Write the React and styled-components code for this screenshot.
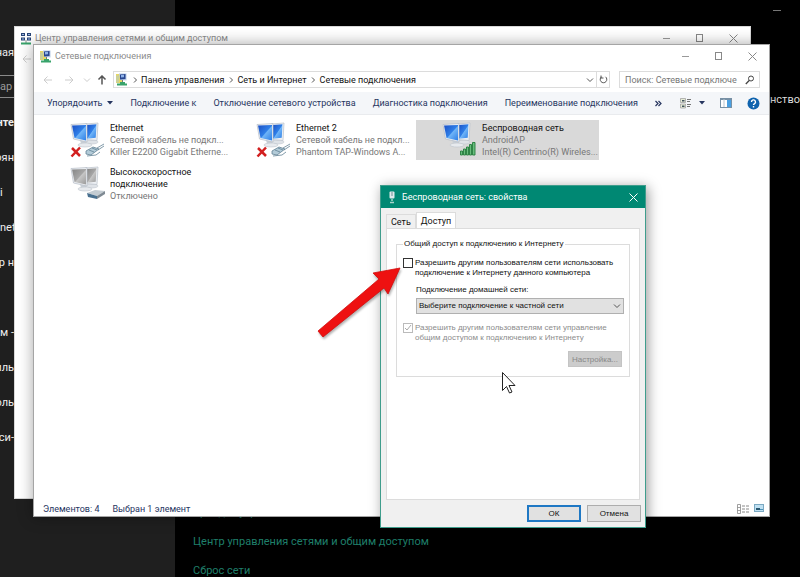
import React from 'react';
import styled, { createGlobalStyle, css } from 'styled-components';

const Global = createGlobalStyle`
  *, *::before, *::after { box-sizing: border-box; }
  html, body { margin: 0; background: #000; }
  body { font-family: Roboto, "Noto Sans", sans-serif; font-size: 9px; color: #1a1a1a; }
  button, input, select { font: inherit; color: inherit; margin: 0; }
  button { border: 0; background: none; padding: 0; }
  svg { display: block; flex: none; }
`;

/* ---------- desktop and settings app ---------- */

const Desktop = styled.div`
  position: relative;
  display: grid;
  grid-template-columns: 175px 1fr;
  height: 100vh;
  min-height: 440px;
  overflow: hidden;
  background: #000;
`;

const SideNav = styled.nav`
  display: flex;
  flex-direction: column;
  padding-top: 35px;
  background: #1f1f1f;
  color: #eee;
  font-size: 11px;
`;

const SideItem = styled.a`
  display: flex;
  align-items: center;
  justify-content: ${(p) => (p.$start ? 'flex-start' : 'flex-end')};
  width: 14px;
  height: 35px;
  white-space: nowrap;
  color: inherit;
  text-decoration: none;
  font-weight: ${(p) => (p.$strong ? 700 : 400)};
`;

const SideSearch = styled.input`
  width: 100%;
  height: 23px;
  margin: 5px 0 7px;
  padding: 0;
  border: solid #8a8a8a;
  border-width: 1px 0;
  background: transparent;
  &::placeholder { color: #999; opacity: 1; }
`;

const SettingsMain = styled.main`
  display: flex;
  flex-direction: column;
  padding: 10px 0 0 18px;
  min-width: 0;
`;

const SettingsBar = styled.header`
  display: flex;
  justify-content: flex-end;
  padding-right: 19px;
`;

const Minimise = styled.button`
  width: 8px;
  height: 1px;
  background: #777;
`;

const SettingsNote = styled.p`
  align-self: flex-end;
  width: 30px;
  margin: 80px 0 0;
  white-space: nowrap;
  color: #ddd;
  font-size: 11px;
  line-height: 18px;
`;

const SettingsLinks = styled.div`
  display: flex;
  flex-direction: column;
  align-items: flex-start;
  margin-top: auto;
  height: 79px;
`;

const SettingsLink = styled.a`
  flex: none;
  height: 29px;
  line-height: 29px;
  color: #1f7f6a;
  font-size: 11px;
  text-decoration: none;
`;

/* ---------- windows ---------- */

const Window = styled.section`
  position: absolute;
  display: flex;
  flex-direction: column;
  background: #fff;
  ${(p) => (p.$back
    ? css`inset: 26px 49px 78px 14px; border: 1px solid #d8d8d8;`
    : css`inset: 44px 30px 60px 33px; border: 1px solid #a5a5a5; box-shadow: 0 0 14px rgba(0, 0, 0, 0.35);`)}
`;

const TitleBar = styled.header`
  display: flex;
  align-items: center;
  gap: 3px;
  height: 22px;
  padding: 0 9px 0 5px;
  color: #8c8c8c;
`;

const WindowTitle = styled.h1`
  flex: 1;
  margin: 0;
  font-size: 9px;
  font-weight: 400;
  white-space: nowrap;
`;

const Controls = styled.div`
  display: flex;
  gap: 17px;
`;

const IconButton = styled.button`
  display: grid;
  place-items: center;
  width: ${(p) => p.$w || 16}px;
  height: 16px;
`;

const BackArrowRow = styled.div`
  padding: 5px 7px;
`;

const NavRow = styled.div`
  display: flex;
  align-items: center;
  height: 25px;
  padding: 0 9px 0 5px;
`;

const Address = styled.div`
  display: flex;
  align-items: center;
  flex: 1;
  height: 17px;
  min-width: 0;
  margin: 0 9px 0 2px;
  padding-left: 1px;
  border: 1px solid #dcdcdc;
  white-space: nowrap;
`;

const Crumb = styled.a`
  color: #111;
  text-decoration: none;
`;

const CrumbMark = styled.span`
  display: grid;
  place-items: center;
  width: 13px;
`;

const AddressEnd = styled.div`
  display: flex;
  align-items: stretch;
  height: 100%;
  margin-left: auto;
`;

const Refresh = styled.button`
  display: grid;
  place-items: center;
  width: 13px;
  border-left: 1px solid #dcdcdc;
`;

const Search = styled.label`
  display: flex;
  align-items: center;
  width: 141px;
  height: 17px;
  padding: 0 4px 0 5px;
  border: 1px solid #dcdcdc;
`;

const SearchInput = styled.input`
  flex: 1;
  min-width: 0;
  padding: 0;
  border: 0;
  outline: 0;
  background: none;
  &::placeholder { color: #777; opacity: 1; }
`;

const Toolbar = styled.div`
  display: flex;
  align-items: center;
  gap: 17px;
  height: 23px;
  padding: 0 9px 0 13px;
  border-bottom: 1px solid #e9ebee;
  background: #f4f6f9;
  color: #26355f;
`;

const ToolButton = styled.button`
  display: flex;
  align-items: center;
  gap: 5px;
  white-space: nowrap;
`;

const ToolIcons = styled.div`
  display: flex;
  align-items: center;
  gap: 15px;
  margin-left: auto;
`;

const Connections = styled.ul`
  display: grid;
  grid-template-columns: repeat(auto-fill, 183px);
  gap: 4px 3px;
  align-content: start;
  flex: 1;
  margin: 0;
  padding: 5px 10px;
  list-style: none;
`;

const Connection = styled.li`
  display: flex;
  gap: 4px;
  height: 40px;
  padding: 2px 0 0 26px;
  background: ${(p) => (p.$selected ? '#d9d9d9' : 'transparent')};
`;

const ConnectionText = styled.div`
  width: 117px;
  line-height: 12px;
  color: #777;
  div { white-space: nowrap; }
`;

const ConnectionName = styled.div`
  color: #111;
  && { white-space: normal; }
`;

const StatusBar = styled.footer`
  display: flex;
  align-items: center;
  gap: 13px;
  height: 15px;
  padding: 0 5px 0 9px;
  color: #26355f;
`;

const StatusIcons = styled.div`
  display: flex;
  gap: 5px;
  margin-left: auto;
`;

/* ---------- dialog ---------- */

const Dialog = styled.section`
  position: absolute;
  top: 185px;
  left: 380px;
  display: flex;
  flex-direction: column;
  width: 266px;
  height: 343px;
  border: 1px solid #3f9d8c;
  background: #f0f0f0;
  box-shadow: 2px 2px 12px rgba(0, 0, 0, 0.4);
  color: #111;
`;

const DialogBar = styled.header`
  display: flex;
  align-items: center;
  gap: 5px;
  height: 22px;
  padding: 0 4px 0 7px;
  background: #008873;
  color: #fff;
`;

const Tabs = styled.div`
  display: flex;
  align-items: flex-end;
  height: 20px;
  padding: 0 5px;
`;

const Tab = styled.button`
  height: ${(p) => (p.$active ? 16 : 14)}px;
  padding: 0 4px;
  border: solid #dcdcdc;
  border-width: 1px 1px 0;
  background: ${(p) => (p.$active ? '#fff' : '#f0f0f0')};
`;

const Panel = styled.div`
  flex: 1;
  margin: 0 5px;
  padding: 9px;
  border: 1px solid #dcdcdc;
  background: #fff;
  font-family: "Liberation Sans", Arial, sans-serif;
  font-size: 8px;
`;

const Group = styled.fieldset`
  display: flex;
  flex-direction: column;
  margin: 0;
  padding: 8px 5px 9px 6px;
  border: 1px solid #dcdcdc;
  min-width: 0;
`;

const Legend = styled.legend`
  padding: 0 1px;
  line-height: 12px;
`;

const Check = styled.label`
  display: flex;
  gap: 2px;
  line-height: 10px;
  white-space: nowrap;
  color: ${(p) => (p.$disabled ? '#8c8c8c' : '#111')};
`;

const CheckBox = styled.input`
  appearance: none;
  flex: none;
  width: 10px;
  height: 10px;
  border: 1px solid ${(p) => (p.disabled ? '#bbb' : '#333')};
  background: #fff;
  &:checked {
    background: url("data:image/svg+xml,%3Csvg xmlns='http://www.w3.org/2000/svg' viewBox='0 0 8 8'%3E%3Cpath d='M1 4l2 2 4-5' fill='none' stroke='%23aaa'/%3E%3C/svg%3E") center / 8px;
  }
`;

const Field = styled.div`
  display: flex;
  flex-direction: column;
  gap: 2px;
  margin: 6px 0 9px 13px;
  line-height: 12px;
`;

const SelectWrap = styled.div`
  display: grid;
  align-items: center;
  > * { grid-area: 1 / 1; }
  svg { justify-self: end; margin-right: 3px; pointer-events: none; }
`;

const Select = styled.select`
  appearance: none;
  width: 100%;
  height: 16px;
  padding: 0 2px;
  border: 1px solid #b0b0b0;
  border-radius: 0;
  background: #e1e1e1;
`;

const PushButton = styled.button`
  width: 54px;
  height: 17px;
  border: ${(p) => (p.$primary ? '2px solid #1f78c4' : '1px solid #adadad')};
  background: #e1e1e1;
  &:disabled { align-self: flex-end; height: 16px; margin: 8px 2px 0 0; border-color: #c4c4c4; background: #ccc; color: #888; }
`;

const DialogActions = styled.footer`
  display: flex;
  justify-content: flex-end;
  gap: 6px;
  padding: 5px 4px;
  font-family: "Liberation Sans", Arial, sans-serif;
  font-size: 8px;
`;

const ArrowOverlay = styled.svg`
  position: absolute;
  top: 260px;
  left: 312px;
  pointer-events: none;
  filter: drop-shadow(1px 2px 1px rgba(0, 0, 0, 0.3));
`;

const Pointer = styled.svg`
  position: absolute;
  top: 371px;
  left: 501px;
  pointer-events: none;
`;

/* ---------- drawings ---------- */

const Dash = () => <svg width="8" height="10"><path d="M0 5.5h7" stroke="#999" /></svg>;
const Square = () => <svg width="8" height="9"><rect x="0.5" y="0.5" width="6" height="7" fill="none" stroke="#888" /></svg>;
const Cross = ({ color = '#888' }) => (
  <svg width="9" height="9"><path d="M.5.5l8 8M8.5.5l-8 8" stroke={color} fill="none" /></svg>
);
const Chevron = ({ down, color = '#555' }) => (
  <svg width="8" height="8" viewBox="0 0 8 8">
    <path d={down ? 'M1 2.5l3 3 3-3' : 'M3 1.5l2.5 2.5L3 6.5'} fill="none" stroke={color} />
  </svg>
);
const Arrow = ({ kind, color }) => (
  <svg width="10" height="10" viewBox="0 0 10 10">
    <path
      d={{ left: 'M9 5H1M4.5 1.5L1 5l3.5 3.5', right: 'M1 5h8M5.5 1.5L9 5 5.5 8.5', up: 'M5 9.5V1M1.5 4.5L5 1l3.5 3.5' }[kind]}
      fill="none" stroke={color} strokeWidth={kind === 'up' ? 1.5 : 1}
    />
  </svg>
);
const Triangle = () => <svg width="6" height="4"><path d="M0 0h6L3 3.5z" fill="#26355f" /></svg>;

const NetworkIcon = () => (
  <svg width="13" height="13" viewBox="0 0 13 13">
    <path d="M1 1h5l1 1v8H1z" fill="#e8d862" />
    <path d="M1 2.5h3v7H1z" fill="#c9cf9a" />
    <path d="M4 .5h7.5v7L5 7z" fill="#b8cbe6" />
    <path d="M5 1.5l5.5-.5v5L5 6.5z" fill="#29468f" />
    <path d="M6 2l3-.3v2.5L6 4.5z" fill="#8fb4ea" />
    <path d="M7.5 7v3" stroke="#777" />
    <path d="M2 11.5h10M5 10h5" stroke="#38a36b" strokeWidth="2" />
  </svg>
);

const CenterIcon = () => (
  <svg width="12" height="13" viewBox="0 0 12 13">
    <path d="M1 1h4v3H1zM7 1h4v3H7zM1 5.5h4v3H1zM7 5.5h4v3H7z" fill="#2a4577" />
    <path d="M2 2h2v1H2zM8 2h2v1H8zM2 6.5h2v1H2zM8 6.5h2v1H8z" fill="#9db8e0" />
    <path d="M6 8v3" stroke="#888" />
    <path d="M1 11.5h10" stroke="#38a36b" strokeWidth="2" />
  </svg>
);

const ConnectionIcon = ({ kind, id }) => {
  const grey = kind === 'modem';
  return (
    <svg width="36" height="36" viewBox="0 0 36 36">
      <defs>
        <linearGradient id={id} x1="0" y1="0" x2="1" y2="1">
          <stop offset="0" stopColor={grey ? '#858585' : '#1b4fc4'} />
          <stop offset="0.5" stopColor={grey ? '#a6a6a6' : '#2f7fe8'} />
          <stop offset="0.55" stopColor={grey ? '#c6c6c6' : '#6fb4f7'} />
          <stop offset="1" stopColor={grey ? '#9b9b9b' : '#2e7fe6'} />
        </linearGradient>
      </defs>
      <ellipse cx="22" cy="20" rx="6" ry="2" fill="#dfe3e8" stroke="#bcc3cb" strokeWidth="0.5" />
      <path d="M15 2l13-1-1 17.500-12-1z" fill="#edf0f4" stroke="#b9c0c8" strokeWidth="0.7" />
      <path d="M17 3l9.500-.8-.8 13.500-9 1z" fill={`url(#${id})`} />
      <path d="M10 18l6 1v4l-5-1z" fill="#cbd1d8" />
      <ellipse cx="15" cy="23" rx="7" ry="2" fill="#e7eaee" stroke="#b5bcc5" strokeWidth="0.5" />
      <path d="M1 2.500l16-1v18.500L3.500 17z" fill="#eef1f5" stroke="#b5bcc5" strokeWidth="0.7" />
      <path d="M2 3.500L16 3v15.500L4.500 16z" fill={`url(#${id})`} />
      {kind === 'cable' && (
        <>
          <path d="M2 26l8 8M10 25.500L1.500 34.500" stroke="#d21f1f" strokeWidth="2.500" />
          <path d="M16 29l7-4 6 2-8 6-5-1z" fill="#b3cbd8" stroke="#628294" strokeWidth="0.8" />
          <path d="M19 28l5 2M22 26l5 2M27 26l7-4M28 28l6-4M17 34l9-1 4-3" stroke="#628294" strokeWidth="0.8" fill="none" />
        </>
      )}
      {kind === 'modem' && (
        <>
          <path d="M17 27l8-3 10 1-8 5z" fill="#c4ccd2" />
          <path d="M17 27l10 3v3l-9-2z" fill="#49708f" />
          <path d="M27 30l8-5v3l-8 5z" fill="#7f8a93" />
        </>
      )}
      {kind === 'wifi' && (
        <path d="M18.500 29h2v4h-2zM21.500 27h2v6h-2zM24.500 25h2v8h-2zM27.500 22.500h2V33h-2zM30.500 20.500h2.500V33h-2.500z" fill="#69bd7d" stroke="#247d3c" strokeWidth="0.9" />
      )}
    </svg>
  );
};

const connections = [
  { id: 'eth1', kind: 'cable', name: 'Ethernet', lines: ['Сетевой кабель не подкл...', 'Killer E2200 Gigabit Etherne...'] },
  { id: 'eth2', kind: 'cable', name: 'Ethernet 2', lines: ['Сетевой кабель не подкл...', 'Phantom TAP-Windows A...'] },
  { id: 'wifi', kind: 'wifi', name: 'Беспроводная сеть', lines: ['AndroidAP', 'Intel(R) Centrino(R) Wireles...'], selected: true },
  { id: 'ppp', kind: 'modem', name: 'Высокоскоростное подключение', lines: ['Отключено'] },
];

const WindowControls = () => (
  <Controls>
    <IconButton aria-label="Свернуть"><Dash /></IconButton>
    <IconButton aria-label="Развернуть"><Square /></IconButton>
    <IconButton aria-label="Закрыть"><Cross /></IconButton>
  </Controls>
);

export default function App() {
  return (
    <>
      <Global />
      <Desktop>
        <SideNav>
          <SideItem href="#">ная</SideItem>
          <SideSearch aria-label="Поиск" placeholder="ар" />
          <SideItem as="span" $strong>нте</SideItem>
          <SideItem href="#">оян</SideItem>
          <SideItem href="#" $start>i</SideItem>
          <SideItem href="#" $start>net</SideItem>
          <SideItem href="#">ор н</SideItem>
          <SideItem as="span" />
          <SideItem href="#">ым -</SideItem>
          <SideItem href="#">иль</SideItem>
          <SideItem href="#">оль</SideItem>
          <SideItem href="#">сси-</SideItem>
        </SideNav>
        <SettingsMain>
          <SettingsBar><Minimise aria-label="Свернуть" /></SettingsBar>
          <SettingsNote>нством</SettingsNote>
          <SettingsLinks>
            <SettingsLink href="#">Брандмауэр Windows</SettingsLink>
            <SettingsLink href="#">Центр управления сетями и общим доступом</SettingsLink>
            <SettingsLink href="#">Сброс сети</SettingsLink>
          </SettingsLinks>
        </SettingsMain>

        <Window $back>
          <TitleBar>
            <CenterIcon />
            <WindowTitle>Центр управления сетями и общим доступом</WindowTitle>
            <WindowControls />
          </TitleBar>
          <BackArrowRow><Arrow kind="left" color="#ccc" /></BackArrowRow>
        </Window>

        <Window>
          <TitleBar>
            <NetworkIcon />
            <WindowTitle>Сетевые подключения</WindowTitle>
            <WindowControls />
          </TitleBar>
          <NavRow>
            <IconButton $w={18} aria-label="Назад"><Arrow kind="left" color="#ccc" /></IconButton>
            <IconButton $w={24} aria-label="Вперёд"><Arrow kind="right" color="#ccc" /></IconButton>
            <IconButton $w={12} aria-label="Журнал"><Chevron down color="#ccc" /></IconButton>
            <IconButton $w={18} aria-label="Вверх"><Arrow kind="up" color="#555" /></IconButton>
            <Address>
              <NetworkIcon />
              <CrumbMark><Chevron /></CrumbMark>
              <Crumb href="#">Панель управления</Crumb>
              <CrumbMark><Chevron /></CrumbMark>
              <Crumb href="#">Сеть и Интернет</Crumb>
              <CrumbMark><Chevron /></CrumbMark>
              <Crumb href="#">Сетевые подключения</Crumb>
              <AddressEnd>
                <IconButton $w={12} aria-label="Список"><Chevron down /></IconButton>
                <Refresh aria-label="Обновить">
                  <svg width="9" height="9" viewBox="0 0 9 9">
                    <path d="M6.500 1.800A3.300 3.300 0 1 1 2.500 1.800M2 .5v2.500h2.500" fill="none" stroke="#555" />
                  </svg>
                </Refresh>
              </AddressEnd>
            </Address>
            <Search>
              <SearchInput aria-label="Поиск" placeholder="Поиск: Сетевые подключе" />
              <svg width="10" height="10" viewBox="0 0 10 10">
                <circle cx="6" cy="3.5" r="2.5" fill="none" stroke="#444" />
                <path d="M4.2 5.5L.8 9" stroke="#444" strokeWidth="1.3" />
              </svg>
            </Search>
          </NavRow>
          <Toolbar>
            <ToolButton>Упорядочить <Triangle /></ToolButton>
            <ToolButton>Подключение к</ToolButton>
            <ToolButton>Отключение сетевого устройства</ToolButton>
            <ToolButton>Диагностика подключения</ToolButton>
            <ToolButton>Переименование подключения</ToolButton>
            <ToolButton aria-label="Ещё">
              <svg width="7" height="7" viewBox="0 0 7 7"><path d="M.5 1L3 3.5.5 6M3.5 1L6 3.5 3.5 6" fill="none" stroke="#26355f" strokeWidth="1.2" /></svg>
            </ToolButton>
            <ToolIcons>
              <ToolButton aria-label="Вид">
                <svg width="14" height="11" viewBox="0 0 14 11">
                  <path d="M.5.5h5v4h-5zM.5 6h5v4h-5z" fill="#e6ecd6" stroke="#999" strokeWidth="0.7" />
                  <path d="M2 2h2.5v1.5H2zM2 7.5h2.5V9H2z" fill="#40525e" />
                  <path d="M7 1.500h4M7 3.500h3M7 6.500h4M7 8.500h3" stroke="#777" />
                </svg>
                <Triangle />
              </ToolButton>
              <ToolButton aria-label="Область просмотра">
                <svg width="12" height="10" viewBox="0 0 12 10">
                  <rect x="0.5" y="0.5" width="11" height="9" fill="#fff" stroke="#7790a5" />
                  <path d="M1 1.5h10" stroke="#7790a5" />
                  <path d="M4 1v8" stroke="#b8c4ce" />
                  <path d="M7 2h4v7H7z" fill="#4aa0e2" />
                </svg>
              </ToolButton>
              <ToolButton aria-label="Справка">
                <svg width="13" height="13" viewBox="0 0 13 13">
                  <circle cx="6.5" cy="6.5" r="6" fill="#0f63ae" />
                  <path d="M4.5 5a2 2 0 1 1 3 1.6c-.8.5-1 .8-1 1.5M6.5 9v1.4" fill="none" stroke="#fff" strokeWidth="1.4" />
                </svg>
              </ToolButton>
            </ToolIcons>
          </Toolbar>
          <Connections>
            {connections.map((c) => (
              <Connection key={c.id} $selected={c.selected}>
                <ConnectionIcon kind={c.kind} id={c.id} />
                <ConnectionText>
                  <ConnectionName>{c.name}</ConnectionName>
                  {c.lines.map((line) => <div key={line}>{line}</div>)}
                </ConnectionText>
              </Connection>
            ))}
          </Connections>
          <StatusBar>
            <span>Элементов: 4</span>
            <span>Выбран 1 элемент</span>
            <StatusIcons>
              <svg width="12" height="10" viewBox="0 0 12 10">
                <path d="M.5.5h3v9h-3zM.5 3.500h3M.5 6.500h3" fill="none" stroke="#888" strokeWidth="0.8" />
                <path d="M5 2h7M5 5h7M5 8h7" stroke="#888" strokeDasharray="3 1" />
              </svg>
              <svg width="10" height="9" viewBox="0 0 10 9">
                <rect x="0.5" y="0.5" width="9" height="7" fill="#bfe0f2" stroke="#7ba9c2" />
                <path d="M2 4h4v2H2z" fill="#27566f" />
                <path d="M6 5.5h3" stroke="#4a92b8" />
              </svg>
            </StatusIcons>
          </StatusBar>
        </Window>

        <Dialog role="dialog" aria-label="Беспроводная сеть: свойства">
          <DialogBar>
            <svg width="9" height="13" viewBox="0 0 9 13">
              <rect x="1.5" y="0.5" width="5" height="7" rx="1" fill="#dfe9ea" />
              <path d="M3 2h2M3 4h2" stroke="#6b8f92" />
              <path d="M4 8v2M2 11.5h4" stroke="#a8d3cb" strokeWidth="1.5" />
            </svg>
            <WindowTitle as="h2">Беспроводная сеть: свойства</WindowTitle>
            <IconButton aria-label="Закрыть"><Cross color="#fff" /></IconButton>
          </DialogBar>
          <Tabs role="tablist">
            <Tab role="tab">Сеть</Tab>
            <Tab role="tab" $active aria-selected="true">Доступ</Tab>
          </Tabs>
          <Panel role="tabpanel">
            <Group>
              <Legend>Общий доступ к подключению к Интернету</Legend>
              <Check>
                <CheckBox type="checkbox" />
                <span>Разрешить другим пользователям сети использовать<br />подключение к Интернету данного компьютера</span>
              </Check>
              <Field>
                <label htmlFor="home">Подключение домашней сети:</label>
                <SelectWrap>
                  <Select id="home"><option>Выберите подключение к частной сети</option></Select>
                  <Chevron down />
                </SelectWrap>
              </Field>
              <Check $disabled>
                <CheckBox type="checkbox" defaultChecked disabled />
                <span>Разрешить другим пользователям сети управление<br />общим доступом к подключению к Интернету</span>
              </Check>
              <PushButton disabled>Настройка...</PushButton>
            </Group>
          </Panel>
          <DialogActions>
            <PushButton $primary>ОК</PushButton>
            <PushButton>Отмена</PushButton>
          </DialogActions>
        </Dialog>

        <ArrowOverlay width="96" height="84" viewBox="0 0 96 84">
          <path d="M88 8L61 13l6 6L6 71l5 6 61-49 4 6z" fill="#ee1111" stroke="#d00c0c" strokeWidth="0.8" />
        </ArrowOverlay>
        <Pointer width="15" height="24" viewBox="0 0 15 24">
          <path d="M1.5 1.5v18l4-4 3 6.5 2.5-1-3-6.5h6z" fill="#fff" stroke="#222" />
        </Pointer>
      </Desktop>
    </>
  );
}
